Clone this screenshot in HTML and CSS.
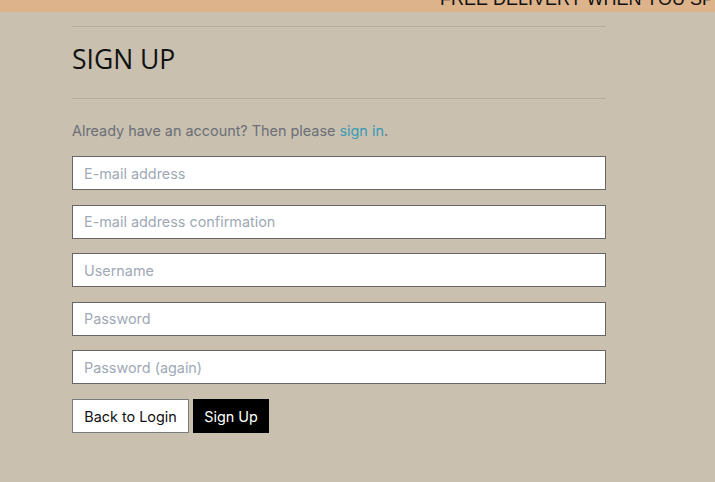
FILE: index.html
```html
<!DOCTYPE html>
<html>
<head>
<meta charset="utf-8">
<link rel="stylesheet" href="styles.css">
</head>
<body>
<div class="banner"><span class="banner-text">FREE DELIVERY WHEN YOU SPEND OVER £50</span></div>
<main class="main">
  <hr class="rule">
  <h1 class="title">SIGN UP</h1>
  <hr class="rule">
  <p class="intro">Already have an account? Then please <a class="link" href="#">sign in</a>.</p>
  <form class="form">
    <input class="field" type="email" placeholder="E-mail address">
    <input class="field" type="email" placeholder="E-mail address confirmation">
    <input class="field" type="text" placeholder="Username">
    <input class="field" type="password" placeholder="Password">
    <input class="field" type="password" placeholder="Password (again)">
    <div class="actions">
      <a class="btn btn-light" href="#">Back to Login</a>
      <button class="btn btn-dark" type="button">Sign Up</button>
    </div>
  </form>
</main>
</body>
</html>
```

FILE: styles.css
```css
html, body {
  margin: 0;
  padding: 0;
  background: #c9c0b0;
  font-family: Inter, "Liberation Sans", sans-serif;
}
.banner {
  height: 12px;
  background: #dcb38a;
  overflow: hidden;
  white-space: nowrap;
  padding-left: 440px;
}
.banner-text {
  display: block;
  margin-top: -10px;
  font-family: "Liberation Sans", Arial, sans-serif;
  font-size: 18px;
  line-height: 18px;
  color: #111;
}
.main {
  width: 534px;
  margin-left: 72px;
  padding-top: 14px;
}
.rule {
  margin: 0;
  border: 0;
  border-top: 1px solid #b7ad9e;
  height: 0;
}
.title {
  margin: 17px 0 23px;
  font-family: "Open Sans", sans-serif;
  font-weight: 400;
  font-size: 26.5px;
  line-height: 31px;
  color: #111;
}
.intro {
  margin: 22px 0 15px;
  font-size: 14.4px;
  line-height: 20px;
  color: #6b6f76;
}
.link {
  color: #3a9ab3;
  text-decoration: none;
}
.form {
  display: flex;
  flex-direction: column;
  gap: 14.5px;
}
.field {
  box-sizing: border-box;
  width: 534px;
  height: 34px;
  margin: 0;
  padding: 0 11px;
  border: 1px solid #666;
  background: #fff;
  font-family: Inter, sans-serif;
  font-size: 14.4px;
  color: #222;
  outline: none;
}
.field::placeholder {
  color: #a0a9b6;
}
.actions {
  display: flex;
  gap: 4px;
  margin-top: 0.5px;
}
.btn {
  box-sizing: border-box;
  height: 34px;
  display: inline-flex;
  align-items: center;
  justify-content: center;
  font-family: Inter, sans-serif;
  font-size: 14.4px;
  text-decoration: none;
  cursor: pointer;
}
.btn-light {
  width: 117px;
  background: #fff;
  color: #111;
  border: 1px solid #7b7b7b;
}
.btn-dark {
  width: 76px;
  background: #000;
  color: #fff;
  border: 1px solid #000;
  padding: 0;
}
```
